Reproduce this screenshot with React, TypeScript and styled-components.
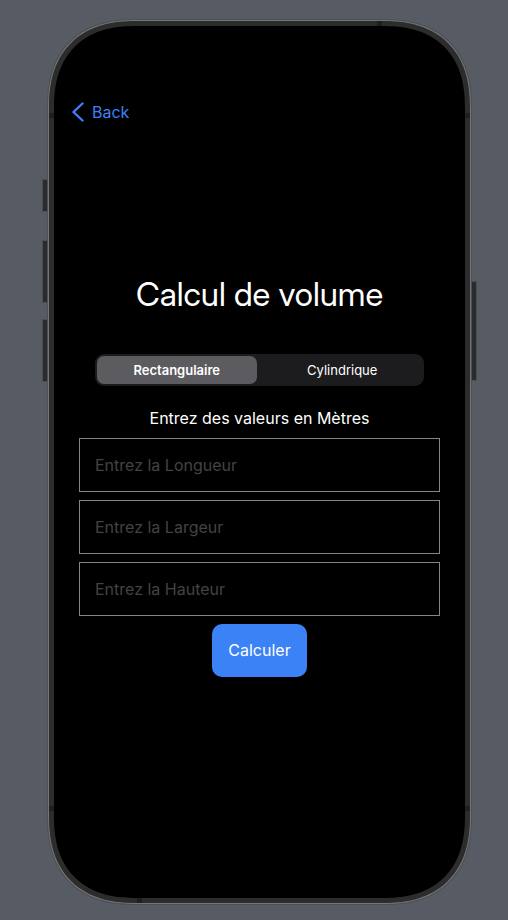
import React, { useState } from "react";
import styled, { createGlobalStyle } from "styled-components";

const GlobalStyle = createGlobalStyle`
  *, *::before, *::after { box-sizing: border-box; }
  body { margin: 0; background: #575c64; }
  body, button, input { font-family: Inter, "Liberation Sans", sans-serif; }
`;

const Desktop = styled.div`
  display: flex;
  min-height: 100vh;
  padding: 20px 37px 16px 48px;
  background: #575c64;
`;

const Phone = styled.div`
  position: relative;
  display: flex;
  flex: 1;
  padding: 5px;
  border: 1px solid #747576;
  border-radius: 88px;
  corner-shape: superellipse(1.25);
  background: #2c2c2c;
  box-shadow: 0 0 0 1px #4d5055;
`;

const SideButton = styled.span<{ $side: "left" | "right"; $top: number; $height: number }>`
  position: absolute;
  ${(p) => p.$side}: -6px;
  top: ${(p) => p.$top}px;
  width: 4px;
  height: ${(p) => p.$height}px;
  background: #2a2b2b;
  box-shadow: 0 0 0 1px #4b4e52;
`;

const Seam = styled.span<{ $edge: "left" | "right" | "top" | "bottom"; $from: "top" | "bottom" | "left" | "right"; $offset: number }>`
  position: absolute;
  ${(p) => p.$edge}: 0;
  ${(p) => p.$from}: ${(p) => p.$offset}px;
  width: 5px;
  height: 5px;
  background: #1f1f1f;
`;

const Screen = styled.div`
  display: flex;
  flex: 1;
  flex-direction: column;
  min-width: 0;
  border-radius: 82px;
  corner-shape: superellipse(1.25);
  background: #000;
`;

const NavBar = styled.nav`
  display: flex;
  padding: 64px 18px 0;
`;

const BackLink = styled.a`
  display: flex;
  align-items: center;
  gap: 8px;
  height: 44px;
  color: #3b82f6;
  font-size: 16px;
  font-weight: 400;
  text-decoration: none;
`;

const Content = styled.main`
  display: flex;
  flex: 1;
  flex-direction: column;
  align-items: center;
  justify-content: center;
  padding: 0 25px 82px;
`;

const Title = styled.h1`
  margin: 0 0 40px;
  color: #fff;
  font-family: "Inter Display", Inter, "Liberation Sans", sans-serif;
  font-size: 33px;
  font-weight: 400;
  line-height: 40px;
  text-align: center;
`;

const Segments = styled.div`
  display: grid;
  grid-template-columns: 1fr 1fr;
  gap: 6px;
  align-self: stretch;
  margin: 0 16px;
  padding: 2px;
  border-radius: 9px;
  background: #1c1c1e;
`;

const Segment = styled.button<{ $active: boolean }>`
  height: 28px;
  padding: 0;
  border: 0;
  border-radius: 7px;
  background: ${(p) => (p.$active ? "#5b5b60" : "transparent")};
  color: #fff;
  font-size: 13px;
  font-weight: ${(p) => (p.$active ? 600 : 400)};
`;

const Hint = styled.p`
  margin: 22px 0 10px;
  color: #fff;
  font-size: 16px;
  font-weight: 400;
  line-height: 20px;
`;

const Form = styled.form`
  display: flex;
  flex-direction: column;
  align-items: center;
  align-self: stretch;
  gap: 8px;
`;

const Field = styled.input`
  width: 100%;
  height: 54px;
  padding: 0 15px;
  border: 1px solid #858585;
  border-radius: 0;
  outline: 0;
  background: #000;
  color: #fff;
  font-size: 16px;
  font-weight: 400;

  &::placeholder { color: #434345; opacity: 1; }
`;

const Submit = styled.button`
  height: 53px;
  padding: 0 16px;
  border: 0;
  border-radius: 10px;
  background: #3b82f6;
  color: #fff;
  font-size: 16px;
  font-weight: 400;
`;

const shapes = [
  { name: "Rectangulaire", fields: ["Longueur", "Largeur", "Hauteur"] },
  { name: "Cylindrique", fields: ["Hauteur", "Rayon"] },
];

export default function App() {
  const [active, setActive] = useState(0);

  return (
    <>
      <GlobalStyle />
      <Desktop>
        <Phone>
          <SideButton $side="left" $top={159} $height={31} />
          <SideButton $side="left" $top={220} $height={61} />
          <SideButton $side="left" $top={299} $height={61} />
          <SideButton $side="right" $top={261} $height={98} />
          <Seam $edge="left" $from="top" $offset={92} />
          <Seam $edge="right" $from="top" $offset={92} />
          <Seam $edge="left" $from="bottom" $offset={92} />
          <Seam $edge="right" $from="bottom" $offset={92} />
          <Seam $edge="top" $from="right" $offset={88} />
          <Seam $edge="bottom" $from="left" $offset={88} />
          <Screen>
            <NavBar>
              <BackLink href="#">
                <svg width="12" height="20" viewBox="0 0 12 20" fill="none" stroke="currentColor" strokeWidth="2.4" strokeLinecap="round" strokeLinejoin="round" aria-hidden="true">
                  <path d="M10.500 1.500 1.500 10l9 8.500" />
                </svg>
                Back
              </BackLink>
            </NavBar>
            <Content>
              <Title>Calcul de volume</Title>
              <Segments role="group" aria-label="Forme">
                {shapes.map((shape, i) => (
                  <Segment key={shape.name} type="button" $active={i === active} aria-pressed={i === active} onClick={() => setActive(i)}>
                    {shape.name}
                  </Segment>
                ))}
              </Segments>
              <Hint>Entrez des valeurs en Mètres</Hint>
              <Form onSubmit={(e) => e.preventDefault()}>
                {shapes[active].fields.map((field) => (
                  <Field key={field} inputMode="decimal" aria-label={field} placeholder={`Entrez la ${field}`} />
                ))}
                <Submit type="submit">Calculer</Submit>
              </Form>
            </Content>
          </Screen>
        </Phone>
      </Desktop>
    </>
  );
}
